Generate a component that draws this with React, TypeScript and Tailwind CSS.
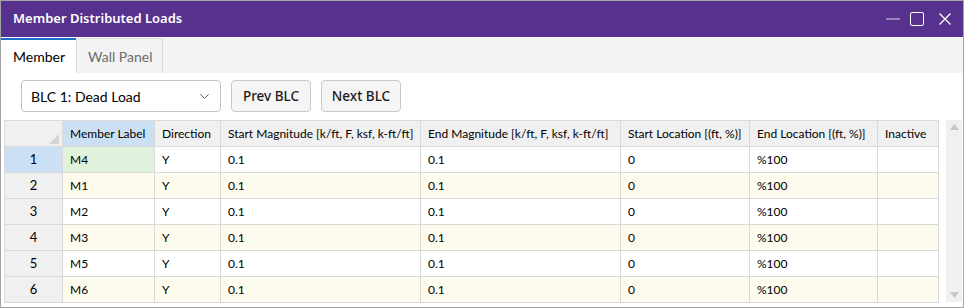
import { ChevronDown } from "lucide-react";

const columns = [
  { label: "Member Label", w: "w-[92px]" },
  { label: "Direction", w: "w-[66px]" },
  { label: "Start Magnitude [k/ft, F, ksf, k-ft/ft]", w: "w-[200px]" },
  { label: "End Magnitude [k/ft, F, ksf, k-ft/ft]", w: "w-[200px]" },
  { label: "Start Location [(ft, %)]", w: "w-[129px]" },
  { label: "End Location [(ft, %)]", w: "w-[128px]" },
  { label: "Inactive", w: "w-[61px]" },
];

const rows = [
  ["M4", "Y", "0.1", "0.1", "0", "%100", ""],
  ["M1", "Y", "0.1", "0.1", "0", "%100", ""],
  ["M2", "Y", "0.1", "0.1", "0", "%100", ""],
  ["M3", "Y", "0.1", "0.1", "0", "%100", ""],
  ["M5", "Y", "0.1", "0.1", "0", "%100", ""],
  ["M6", "Y", "0.1", "0.1", "0", "%100", ""],
];

function TitleBar() {
  return (
    <div className="flex h-[36px] items-center bg-[#56318d] pl-[12px] text-white">
      <span className="font-['Noto_Sans'] text-[13px] font-semibold">Member Distributed Loads</span>
      <div className="ml-auto flex items-center">
        <div className="mr-[10px] h-[2px] w-[14px] bg-[#9a83bd]" />
        <div className="mr-[14px] h-[14px] w-[14px] rounded-[2px] border-[1.5px] border-white" />
        <svg width="14" height="14" viewBox="0 0 14 14" className="mr-[11px]">
          <path d="M1.5 1.5 L12.5 12.5 M12.5 1.5 L1.5 12.5" stroke="white" strokeWidth="1.3" />
        </svg>
      </div>
    </div>
  );
}

function Tabs() {
  return (
    <div className="flex h-[36px] border-t border-white bg-[#f3f3f3]">
      <div className="flex w-[75px] items-center border-t-2 border-[#1a6fcd] bg-white pl-[12px] text-[14px] text-black">
        Member
      </div>
      <div className="flex w-[87px] items-center border border-b-0 border-[#dcdcdc] pl-[11px] text-[14px] text-[#6b6b6b]">
        Wall Panel
      </div>
    </div>
  );
}

function Toolbar() {
  return (
    <div className="flex h-[32px] items-center gap-[10px] pl-[17px]">
      <div className="flex h-[32px] w-[200px] items-center rounded-[4px] border border-[#c4c4c4] bg-white pl-[9px] pr-[8px] text-[14px] text-black">
        <span>BLC 1: Dead Load</span>
        <ChevronDown size={15} strokeWidth={1.5} className="ml-auto text-[#444]" />
      </div>
      <button className="h-[32px] w-[80px] rounded-[4px] border border-[#c8c8c8] bg-[#f5f5f5] font-['Noto_Sans'] text-[13.5px] font-medium text-[#1b1b1b]">
        Prev BLC
      </button>
      <button className="h-[32px] w-[80px] rounded-[4px] border border-[#c8c8c8] bg-[#f5f5f5] font-['Noto_Sans'] text-[13.5px] font-medium text-[#1b1b1b]">
        Next BLC
      </button>
    </div>
  );
}

function Grid() {
  return (
    <div className="flex">
      <div className="border-l border-t border-[#d9d9d9] text-[12px] text-black">
        <div className="flex h-[26px]">
          <div className="relative w-[58px] border-b border-r border-[#d9d9d9] bg-[#f0f0f0]">
            <svg width="10" height="10" viewBox="0 0 10 10" className="absolute bottom-[2px] right-[3px]">
              <path d="M10 0 L10 10 L0 10 Z" fill="#d4d4d4" />
            </svg>
          </div>
          {columns.map((c, i) => (
            <div
              key={c.label}
              className={`${c.w} flex items-center overflow-hidden whitespace-nowrap border-b border-r border-[#d9d9d9] pl-[7px] ${
                i === 0 ? "bg-[#cce0f5]" : "bg-[#f0f0f0]"
              }`}
            >
              {c.label}
            </div>
          ))}
        </div>
        {rows.map((r, ri) => (
          <div key={ri} className="flex h-[26px]">
            <div
              className={`flex w-[58px] items-center justify-center border-b border-r border-[#d9d9d9] text-[13px] ${
                ri === 0 ? "bg-[#cce0f5]" : "bg-[#f0f0f0]"
              }`}
            >
              {ri + 1}
            </div>
            {r.map((v, ci) => (
              <div
                key={ci}
                className={`${columns[ci].w} flex items-center border-b border-r border-[#d9d9d9] pl-[7px] ${
                  ri === 0 && ci === 0 ? "bg-[#dff3dc]" : ri % 2 === 1 ? "bg-[#fdfbee]" : "bg-white"
                }`}
              >
                {v}
              </div>
            ))}
          </div>
        ))}
      </div>
      <div className="ml-[7px] flex h-[182px] w-[16px] flex-col items-center justify-between bg-[#f0f0f0] py-[4px]">
        <svg width="9" height="6" viewBox="0 0 9 6">
          <path d="M4.5 0 L9 6 L0 6 Z" fill="#c6c6c6" />
        </svg>
        <svg width="9" height="6" viewBox="0 0 9 6">
          <path d="M0 0 L9 0 L4.5 6 Z" fill="#c6c6c6" />
        </svg>
      </div>
    </div>
  );
}

export default function App() {
  return (
    <div
      className="flex h-[308px] w-[964px] flex-col border border-[#a3a3a3] bg-white"
      style={{ fontFamily: 'Lato, "Noto Sans", sans-serif' }}
    >
      <TitleBar />
      <Tabs />
      <div className="flex flex-col gap-[8px] pl-[3px] pt-[7px]">
        <Toolbar />
        <Grid />
      </div>
    </div>
  );
}
